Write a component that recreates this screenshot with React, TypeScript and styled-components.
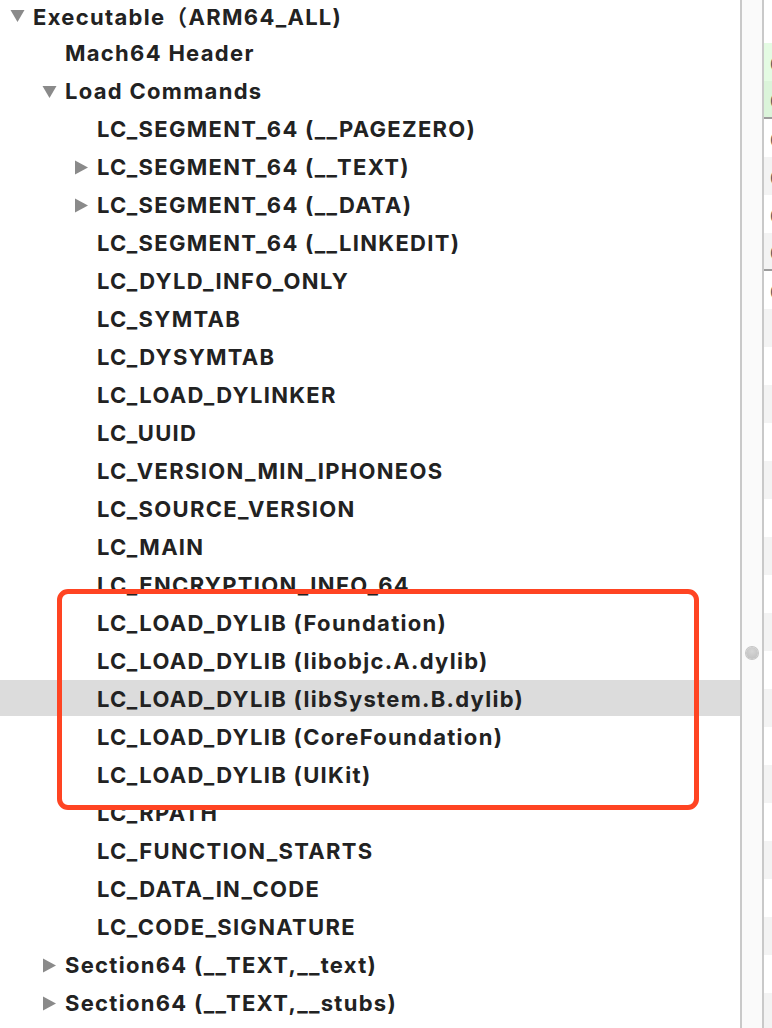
import styled, { createGlobalStyle } from "styled-components";

const GlobalStyle = createGlobalStyle`
  html, body {
    margin: 0;
    padding: 0;
    background: #ffffff;
    overflow: hidden;
  }
  body {
    font-family: Inter, "Noto Sans CJK SC", sans-serif;
  }
`;

const Window = styled.div`
  display: flex;
  width: 772px;
  height: 1028px;
  overflow: hidden;
  position: relative;
`;

const TreePane = styled.div`
  width: 740px;
  flex-shrink: 0;
  overflow: hidden;
`;

const TreeList = styled.ul`
  list-style: none;
  margin: -4px 0 0;
  padding: 0;
`;

const Row = styled.li<{ $level: number; $selected?: boolean }>`
  display: flex;
  align-items: center;
  height: 36px;
  margin-bottom: 2px;
  padding-left: ${(p) => 10 + p.$level * 32}px;
  padding-top: 1px;
  box-sizing: border-box;
  background: ${(p) => (p.$selected ? "#dcdcdc" : "transparent")};
  white-space: nowrap;
`;

const Disclosure = styled.span`
  width: 23px;
  flex-shrink: 0;
  display: flex;
  align-items: center;
  padding-top: 1px;
`;

const Label = styled.span`
  font-size: 22px;
  font-weight: 700;
  color: #222222;
  letter-spacing: 1.3px;
`;

const Splitter = styled.div`
  width: 20px;
  flex-shrink: 0;
  border-left: 2px solid #c9c9c9;
  border-right: 2px solid #c9c9c9;
  background: #fafafa;
  display: flex;
  justify-content: center;
  padding-top: 647px;
  box-sizing: content-box;
`;

const Knob = styled.div`
  width: 12px;
  height: 12px;
  border-radius: 50%;
  background: radial-gradient(circle at 50% 35%, #d6d6d6, #bdbdbd);
  box-shadow: 0 0 0 1px #c4c4c4;
`;

const DetailPane = styled.div`
  flex: 1;
  padding-top: 43px;
  overflow: hidden;
`;

const DetailRow = styled.div<{ $tone: "green" | "green2" | "white" | "grey"; $sep?: boolean }>`
  height: ${(p) => (p.$sep ? 36 : 38)}px;
  border-bottom: ${(p) => (p.$sep ? "2px solid #9c9c9c" : "none")};
  background: ${(p) =>
    p.$tone === "green"
      ? "#e4fbe3"
      : p.$tone === "green2"
      ? "#dbf4da"
      : p.$tone === "grey"
      ? "#f3f3f3"
      : "#ffffff"};
  display: flex;
  align-items: center;
  padding-left: 6px;
  font-size: 15px;
  color: #555;
  font-family: "Liberation Sans", sans-serif;
  white-space: nowrap;
`;

const RedFrame = styled.div`
  position: absolute;
  left: 57px;
  top: 589px;
  width: 642px;
  height: 221px;
  box-sizing: border-box;
  border: 5px solid #ff4422;
  border-radius: 11px;
  pointer-events: none;
`;

const Triangle = ({ open }: { open: boolean }) => (
  <svg width="15" height="15" viewBox="0 0 15 15">
    {open ? (
      <polygon points="0.5,2 14.5,2 7.5,14" fill="#8a8a8a" />
    ) : (
      <polygon points="1,0.5 14,7.5 1,14.5" fill="#8a8a8a" />
    )}
  </svg>
);

type Node = { label: string; level: number; toggle?: "open" | "closed"; selected?: boolean };

const nodes: Node[] = [
  { label: "Executable（ARM64_ALL)", level: 0, toggle: "open" },
  { label: "Mach64 Header", level: 1 },
  { label: "Load Commands", level: 1, toggle: "open" },
  { label: "LC_SEGMENT_64 (__PAGEZERO)", level: 2 },
  { label: "LC_SEGMENT_64 (__TEXT)", level: 2, toggle: "closed" },
  { label: "LC_SEGMENT_64 (__DATA)", level: 2, toggle: "closed" },
  { label: "LC_SEGMENT_64 (__LINKEDIT)", level: 2 },
  { label: "LC_DYLD_INFO_ONLY", level: 2 },
  { label: "LC_SYMTAB", level: 2 },
  { label: "LC_DYSYMTAB", level: 2 },
  { label: "LC_LOAD_DYLINKER", level: 2 },
  { label: "LC_UUID", level: 2 },
  { label: "LC_VERSION_MIN_IPHONEOS", level: 2 },
  { label: "LC_SOURCE_VERSION", level: 2 },
  { label: "LC_MAIN", level: 2 },
  { label: "LC_ENCRYPTION_INFO_64", level: 2 },
  { label: "LC_LOAD_DYLIB (Foundation)", level: 2 },
  { label: "LC_LOAD_DYLIB (libobjc.A.dylib)", level: 2 },
  { label: "LC_LOAD_DYLIB (libSystem.B.dylib)", level: 2, selected: true },
  { label: "LC_LOAD_DYLIB (CoreFoundation)", level: 2 },
  { label: "LC_LOAD_DYLIB (UIKit)", level: 2 },
  { label: "LC_RPATH", level: 2 },
  { label: "LC_FUNCTION_STARTS", level: 2 },
  { label: "LC_DATA_IN_CODE", level: 2 },
  { label: "LC_CODE_SIGNATURE", level: 2 },
  { label: "Section64 (__TEXT,__text)", level: 1, toggle: "closed" },
  { label: "Section64 (__TEXT,__stubs)", level: 1, toggle: "closed" },
];

type Detail = { tone: "green" | "green2" | "white" | "grey"; sep?: boolean; text?: string };

const details: Detail[] = [
  { tone: "green", text: "(" },
  { tone: "green2", sep: true, text: "(" },
  { tone: "white", text: "(" },
  { tone: "grey", text: "(" },
  { tone: "white", text: "(" },
  { tone: "grey", sep: true, text: "(" },
  { tone: "white", text: "(" },
  ...Array.from({ length: 20 }, (_, i): Detail => ({ tone: i % 2 === 0 ? "grey" : "white" })),
];

export default function App() {
  return (
    <>
      <GlobalStyle />
      <Window>
        <TreePane>
          <TreeList>
            {nodes.map((n) => (
              <Row key={n.label} $level={n.level} $selected={n.selected}>
                <Disclosure>{n.toggle && <Triangle open={n.toggle === "open"} />}</Disclosure>
                <Label>{n.label}</Label>
              </Row>
            ))}
          </TreeList>
        </TreePane>
        <Splitter>
          <Knob />
        </Splitter>
        <DetailPane>
          {details.map((d, i) => (
            <DetailRow key={i} $tone={d.tone} $sep={d.sep}>
              {d.text}
            </DetailRow>
          ))}
        </DetailPane>
        <RedFrame />
      </Window>
    </>
  );
}
